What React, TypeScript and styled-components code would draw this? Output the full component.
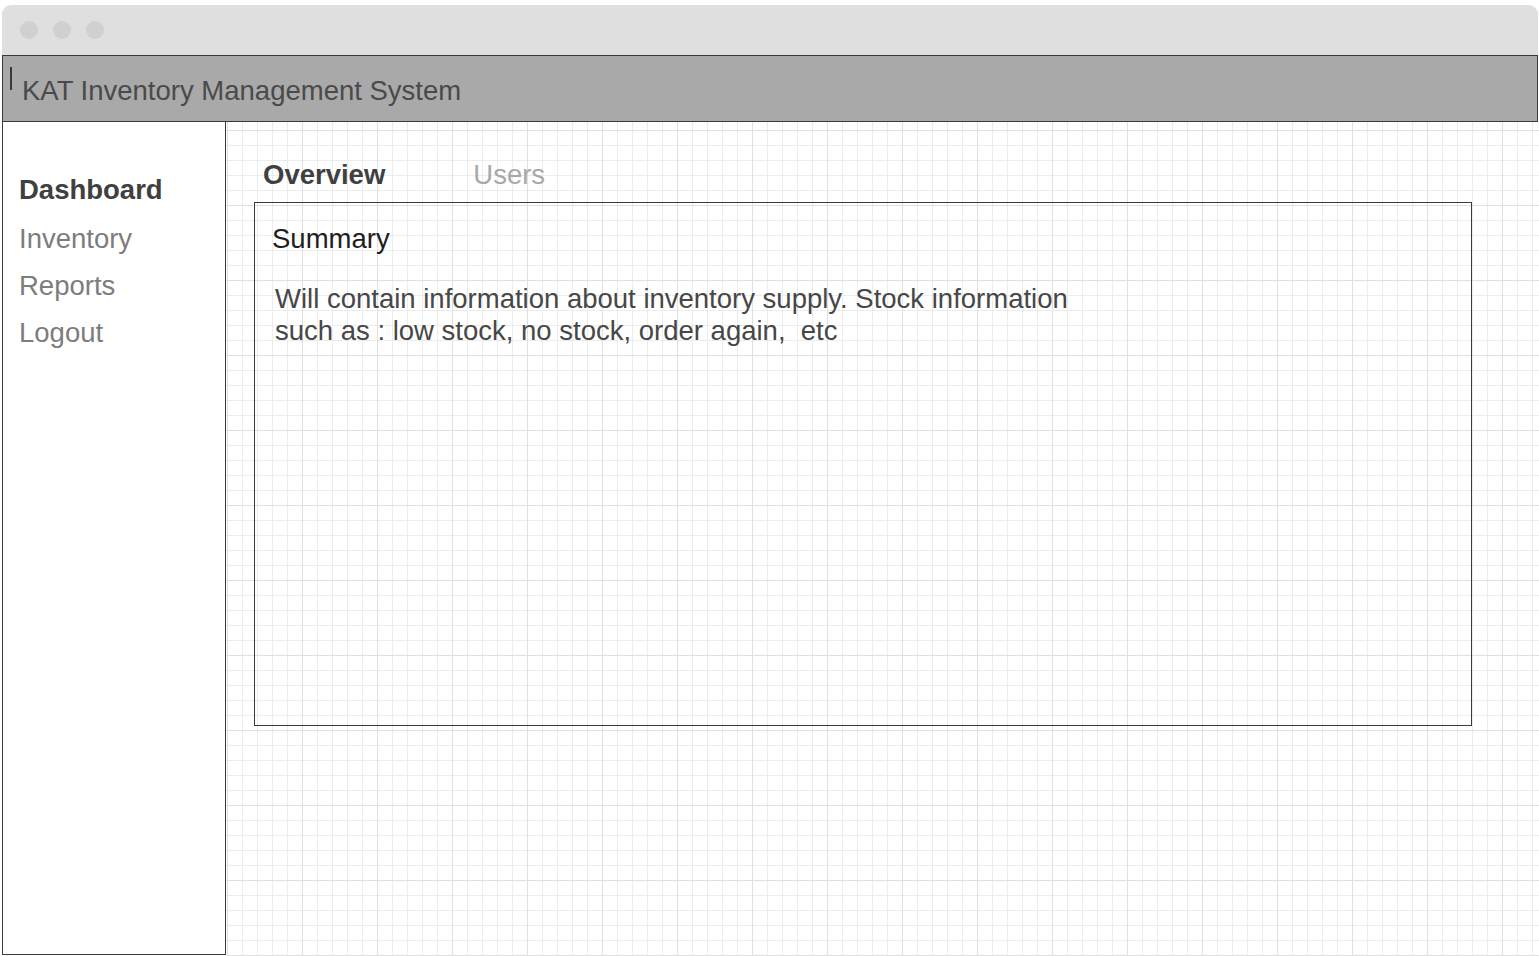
import React from "react";
import styled, { createGlobalStyle } from "styled-components";

const GlobalStyle = createGlobalStyle`
  html, body {
    margin: 0;
    padding: 0;
    background: #ffffff;
    overflow: hidden;
    font-family: "Liberation Sans", Arial, Helvetica, sans-serif;
  }
  * { box-sizing: border-box; }
`;

const Window = styled.div`
  margin: 5px 1px 0 2px;
  height: 951px;
  display: flex;
  flex-direction: column;
`;

const TitleBar = styled.div`
  height: 50px;
  flex: none;
  background: #dfdfdf;
  border-radius: 9px 9px 0 0;
  display: flex;
  align-items: center;
  gap: 15px;
  padding-left: 18px;
`;

const Dot = styled.span`
  width: 18px;
  height: 18px;
  border-radius: 50%;
  background: #d0d0d0;
`;

const Header = styled.header`
  height: 67px;
  flex: none;
  background: #a9a9a9;
  border: 1px solid #3a3a3a;
  display: flex;
  align-items: flex-start;
  padding-left: 7px;
`;

const Caret = styled.span`
  width: 2px;
  height: 23px;
  margin-top: 11px;
  background: #3a3a3a;
`;

const AppTitle = styled.h1`
  margin: 19px 0 0 10px;
  font-size: 27.5px;
  line-height: 32px;
  font-weight: 400;
  color: #4a4a4a;
`;

const Body = styled.div`
  flex: 1;
  display: flex;
  min-height: 0;
`;

const Sidebar = styled.nav`
  width: 224px;
  flex: none;
  margin-bottom: 1px;
  background: #ffffff;
  border: 1px solid #3a3a3a;
  border-top: none;
  padding: 52px 0 0 16px;
  display: flex;
  flex-direction: column;
  gap: 15px;
`;

const NavItem = styled.div<{ $active?: boolean }>`
  font-size: 27.5px;
  line-height: 32px;
  font-weight: ${(p) => (p.$active ? 700 : 400)};
  color: ${(p) => (p.$active ? "#404040" : "#7d7d7d")};
  margin-bottom: ${(p) => (p.$active ? "2px" : "0")};
`;

const Main = styled.main`
  flex: 1;
  margin-right: -1px;
  padding: 37px 0 0 28px;
  background-color: #ffffff;
  background-image:
    linear-gradient(to right, #e0e0e0 1px, transparent 1px),
    linear-gradient(to bottom, #e0e0e0 1px, transparent 1px),
    linear-gradient(to right, #ececec 1px, transparent 1px),
    linear-gradient(to bottom, #ececec 1px, transparent 1px);
  background-size: 75px 75px, 75px 75px, 15px 15px, 15px 15px;
  background-position: 1px 8px, 1px 8px, 1px 8px, 1px 8px;
`;

const Tabs = styled.div`
  display: flex;
  gap: 88px;
  padding-left: 9px;
`;

const Tab = styled.div<{ $active?: boolean }>`
  font-size: 27.5px;
  line-height: 32px;
  font-weight: ${(p) => (p.$active ? 700 : 400)};
  color: ${(p) => (p.$active ? "#404040" : "#a8a8a8")};
`;

const Card = styled.section`
  margin-top: 11px;
  width: 1218px;
  height: 524px;
  border: 1px solid #3a3a3a;
  padding: 20px 0 0 17px;
`;

const CardTitle = styled.h2`
  margin: 0;
  font-size: 27.5px;
  line-height: 32px;
  font-weight: 400;
  color: #1e1e1e;
`;

const CardText = styled.p`
  margin: 28px 0 0 3px;
  font-size: 27.5px;
  line-height: 32px;
  color: #474747;
`;

export default function App() {
  return (
    <>
      <GlobalStyle />
      <Window>
        <TitleBar>
          <Dot />
          <Dot />
          <Dot />
        </TitleBar>
        <Header>
          <Caret />
          <AppTitle>KAT Inventory Management System</AppTitle>
        </Header>
        <Body>
          <Sidebar>
            <NavItem $active>Dashboard</NavItem>
            <NavItem>Inventory</NavItem>
            <NavItem>Reports</NavItem>
            <NavItem>Logout</NavItem>
          </Sidebar>
          <Main>
            <Tabs>
              <Tab $active>Overview</Tab>
              <Tab>Users</Tab>
            </Tabs>
            <Card>
              <CardTitle>Summary</CardTitle>
              <CardText>
                Will contain information about inventory supply. Stock information
                <br />
                such as : low stock, no stock, order again,&nbsp; etc
              </CardText>
            </Card>
          </Main>
        </Body>
      </Window>
    </>
  );
}
